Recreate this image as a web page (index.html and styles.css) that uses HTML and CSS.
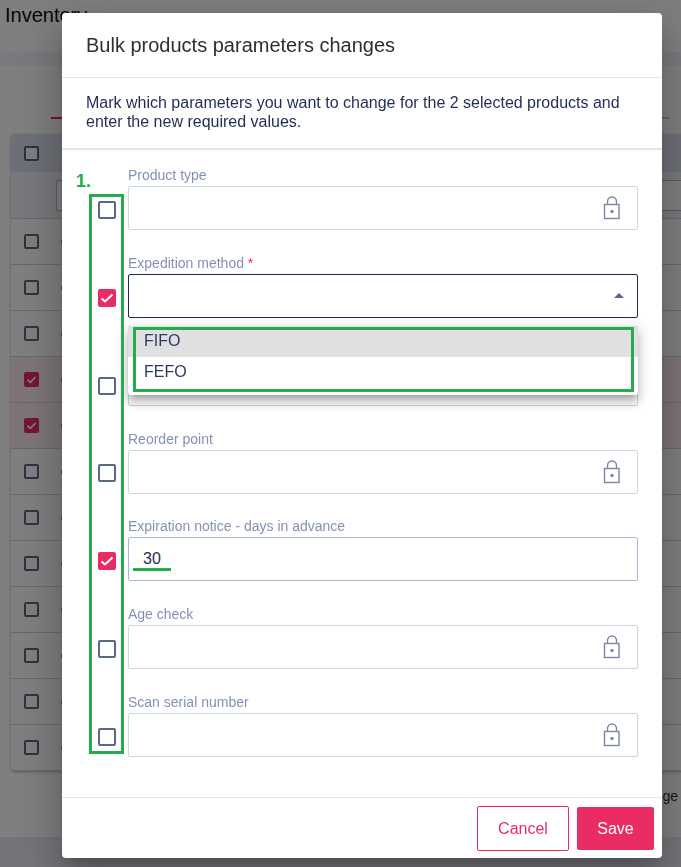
FILE: index.html
```html
<!DOCTYPE html>
<html lang="en">
<head>
<meta charset="utf-8">
<title>Inventory</title>
<link rel="stylesheet" href="styles.css">
</head>
<body>
<div class="page">
  <header class="topbar"><h1>Inventory</h1></header>
  <div class="subbar"></div>
  <div class="tabs"><span class="tab-line"></span><span class="tab-rest"></span></div>
  <div class="table">
    <div class="thead"><span class="cb"></span></div>
    <div class="tfilter"><span class="filter-input"></span></div>
    <div class="tr"><span class="cb"></span><i class="mark"></i></div>
    <div class="tr"><span class="cb"></span><i class="mark"></i></div>
    <div class="tr"><span class="cb"></span><i class="mark"></i></div>
    <div class="tr sel"><span class="cb on"><svg viewBox="0 0 15 15"><path d="M3.500 7.700l2.800 2.600 5.200-5.200"/></svg></span><i class="mark"></i></div>
    <div class="tr sel"><span class="cb on"><svg viewBox="0 0 15 15"><path d="M3.500 7.700l2.800 2.600 5.200-5.200"/></svg></span><i class="mark"></i></div>
    <div class="tr"><span class="cb"></span><i class="mark"></i></div>
    <div class="tr"><span class="cb"></span><i class="mark"></i></div>
    <div class="tr"><span class="cb"></span><i class="mark"></i></div>
    <div class="tr"><span class="cb"></span><i class="mark"></i></div>
    <div class="tr"><span class="cb"></span><i class="mark"></i></div>
    <div class="tr"><span class="cb"></span><i class="mark"></i></div>
    <div class="tr"><span class="cb"></span><i class="mark"></i></div>
  </div>
  <div class="pager">ge</div>
  <div class="footbar"></div>
</div>
<div class="overlay"></div>
<div class="modal">
  <div class="modal-head">Bulk products parameters changes</div>
  <p class="modal-intro">Mark which parameters you want to change for the 2 selected products and enter the new required values.</p>
  <div class="modal-body">
    <div class="field">
      <span class="check"></span>
      <div class="control">
        <label>Product type</label>
        <div class="input"><svg class="lock" viewBox="0 0 18 24"><path d="M4.500 8.500V5.500a4.500 4.500 0 0 1 9 0V8.500"/><rect x="1.500" y="8.500" width="14.500" height="14"/><circle cx="9" cy="15.500" r="1.700"/></svg></div>
      </div>
    </div>
    <div class="field">
      <span class="check on"><svg viewBox="0 0 18 18"><path d="M3.500 9.500L7 12.500l7.500-7"/></svg></span>
      <div class="control">
        <label>Expedition method<span class="req"> *</span></label>
        <div class="input open"><span class="caret"></span></div>
      </div>
    </div>
    <div class="field">
      <span class="check"></span>
      <div class="control">
        <label></label>
        <div class="input"></div>
      </div>
    </div>
    <div class="field">
      <span class="check"></span>
      <div class="control">
        <label>Reorder point</label>
        <div class="input"><svg class="lock" viewBox="0 0 18 24"><path d="M4.500 8.500V5.500a4.500 4.500 0 0 1 9 0V8.500"/><rect x="1.500" y="8.500" width="14.500" height="14"/><circle cx="9" cy="15.500" r="1.700"/></svg></div>
      </div>
    </div>
    <div class="field">
      <span class="check on"><svg viewBox="0 0 18 18"><path d="M3.500 9.500L7 12.500l7.500-7"/></svg></span>
      <div class="control">
        <label>Expiration notice - days in advance</label>
        <div class="input active"><span class="value">30</span></div>
      </div>
    </div>
    <div class="field">
      <span class="check"></span>
      <div class="control">
        <label>Age check</label>
        <div class="input"><svg class="lock" viewBox="0 0 18 24"><path d="M4.500 8.500V5.500a4.500 4.500 0 0 1 9 0V8.500"/><rect x="1.500" y="8.500" width="14.500" height="14"/><circle cx="9" cy="15.500" r="1.700"/></svg></div>
      </div>
    </div>
    <div class="field">
      <span class="check"></span>
      <div class="control">
        <label>Scan serial number</label>
        <div class="input"><svg class="lock" viewBox="0 0 18 24"><path d="M4.500 8.500V5.500a4.500 4.500 0 0 1 9 0V8.500"/><rect x="1.500" y="8.500" width="14.500" height="14"/><circle cx="9" cy="15.500" r="1.700"/></svg></div>
      </div>
    </div>
    <div class="menu">
      <div class="menu-item hover">FIFO</div>
      <div class="menu-item">FEFO</div>
    </div>
    <span class="note-num">1.</span>
    <span class="note note-checks"></span>
    <span class="note note-menu"></span>
    <span class="note-line"></span>
  </div>
  <div class="modal-foot">
    <button class="btn ghost">Cancel</button>
    <button class="btn solid">Save</button>
  </div>
</div>
</body>
</html>
```
FILE: styles.css
```css
* { box-sizing: border-box; }
html, body { margin: 0; height: 100%; overflow: hidden; }
body { font-family: "Liberation Sans", Arial, sans-serif; background: #fff; color: #1f2d54; }
.page { height: 867px; display: flex; flex-direction: column; }
.topbar { flex: none; height: 52px; background: #fff; padding: 2px 0 0 5px; }
.topbar h1 { margin: 0; font-size: 20px; font-weight: 400; line-height: 26px; color: #111; }
.subbar { flex: none; height: 14px; background: #f2f5fb; }
.tabs { flex: none; height: 68px; padding: 51px 0 0 51px; background: #fff; display: flex; align-items: flex-start; }
.tab-line { width: 49px; height: 2px; background: #e92c64; }
.tab-rest { width: 570px; height: 2px; background: #d2d2d2; }
.table { flex: none; margin: 0 0 0 11px; border-radius: 4px; box-shadow: 0 1px 3px rgba(0,0,0,.3); background: #fff; width: 700px; }
.thead { height: 38px; border-radius: 4px 4px 0 0; background: #dce1ee; padding: 12px 0 0 13px; }
.tfilter { height: 47px; padding: 8px 0 0 45px; border-bottom: 1px solid #cfd3da; background: #f1f3f8; }
.filter-input { display: block; height: 31px; border: 1px solid #a9b5d2; border-radius: 2px; background: #fff; }
.tr { display: flex; height: 46px; padding: 15px 0 0 13px; border-bottom: 1px solid #cfd3da; }
.tr.sel { background: #fbebef; }
.cb { display: block; flex: none; width: 15px; height: 15px; border: 2px solid #5b6786; border-radius: 2px; background: #fff; }
.cb.on { background: #e92c64; border-color: #e92c64; }
.cb svg { display: block; width: 15px; height: 15px; margin: -2px; fill: none; stroke: #fff; stroke-width: 1.600; }
.mark { display: block; width: 1px; height: 4px; margin: 6px 0 0 22px; background: #d98a2b; }
.pager { flex: none; text-align: right; padding: 17px 3px 0 0; font-size: 14px; height: 66px; color: #1f2d54; }
.footbar { flex: 1; background: #e8ebf2; }
.overlay { position: fixed; inset: 0; background: rgba(0,0,0,.5); }
.modal { position: absolute; left: 62px; top: 13px; width: 600px; height: 845px; background: #fff; border-radius: 4px; box-shadow: 0 11px 15px -7px rgba(0,0,0,.2), 0 24px 38px 3px rgba(0,0,0,.14), 0 9px 46px 8px rgba(0,0,0,.12); display: flex; flex-direction: column; }
.modal-head { flex: none; height: 65px; border-bottom: 1px solid #e1e4ea; padding: 21px 0 0 24px; font-size: 20px; line-height: 22px; color: #2c2f36; }
.modal-intro { flex: none; height: 72px; margin: 0; border-bottom: 2px solid #e1e4ea; padding: 15px 24px 0; font-size: 16px; line-height: 19px; color: #1f2d54; }
.modal-body { position: relative; flex: 1; padding: 16.450px 24px 0 27px; }
.field { display: flex; height: 87.750px; }
.check { flex: none; width: 18px; height: 18px; margin: 34.650px 12px 0 9px; border: 2px solid #5b6786; border-radius: 2px; background: #fff; }
.check.on { background: #e92c64; border-color: #e92c64; }
.check svg { display: block; width: 18px; height: 18px; margin: -2px; fill: none; stroke: #fff; stroke-width: 2; }
.control { flex: 1; min-width: 0; }
.control label { display: block; height: 20px; font-size: 14px; line-height: 18px; color: #8590b5; }
.req { color: #e92c64; }
.input { position: relative; height: 44px; border: 1px solid #cdd6e6; border-radius: 2px; background: #fff; }
.input.open { border-color: #1f2d54; }
.input.active { border-color: #aab6d3; }
.value { display: block; padding: 12px 0 0 14px; font-size: 16px; line-height: 18px; color: #1f2d54; }
.lock { position: absolute; right: 16px; top: 9px; width: 18px; height: 24px; fill: none; stroke: #7d87a3; stroke-width: 1.400; }
.lock circle { fill: #7d87a3; stroke: none; }
.caret { position: absolute; right: 13px; top: 18px; width: 0; height: 0; border: 5px solid transparent; border-top: 0; border-bottom: 5px solid #5b6786; }
.menu { position: absolute; left: 66px; top: 176px; width: 510px; height: 69px; background: #fff; box-shadow: 0 5px 5px -3px rgba(0,0,0,.2), 0 8px 10px 1px rgba(0,0,0,.14), 0 3px 14px 2px rgba(0,0,0,.12); border-radius: 0 0 3px 3px; }
.menu-item { height: 30px; padding: 0 0 0 16px; font-size: 16px; line-height: 30px; color: #2d3a60; }
.menu-item.hover { height: 31px; background: #e0e0e0; }
.note-num { position: absolute; left: 14px; top: 21px; font-size: 18px; font-weight: 700; line-height: 20px; color: #23ad4f; }
.note { position: absolute; border: 3px solid #23ad4f; }
.note-checks { left: 27px; top: 44px; width: 35px; height: 560px; }
.note-menu { left: 71px; top: 177px; width: 501px; height: 65px; }
.note-line { position: absolute; left: 71px; top: 418px; width: 38px; height: 3px; background: #23ad4f; }
.modal-foot { flex: none; height: 61px; border-top: 1px solid #e1e4ea; padding: 8px 8px 0 0; display: flex; justify-content: flex-end; align-items: flex-start; gap: 8px; }
.btn { border-radius: 2px; font: 16px "Liberation Sans", Arial, sans-serif; }
.ghost { width: 92px; height: 45px; background: #fff; color: #e92c64; border: 1px solid #e92c64; }
.solid { width: 77px; height: 43px; margin-top: 1px; background: #e92c64; color: #fff; border: 0; }
```
